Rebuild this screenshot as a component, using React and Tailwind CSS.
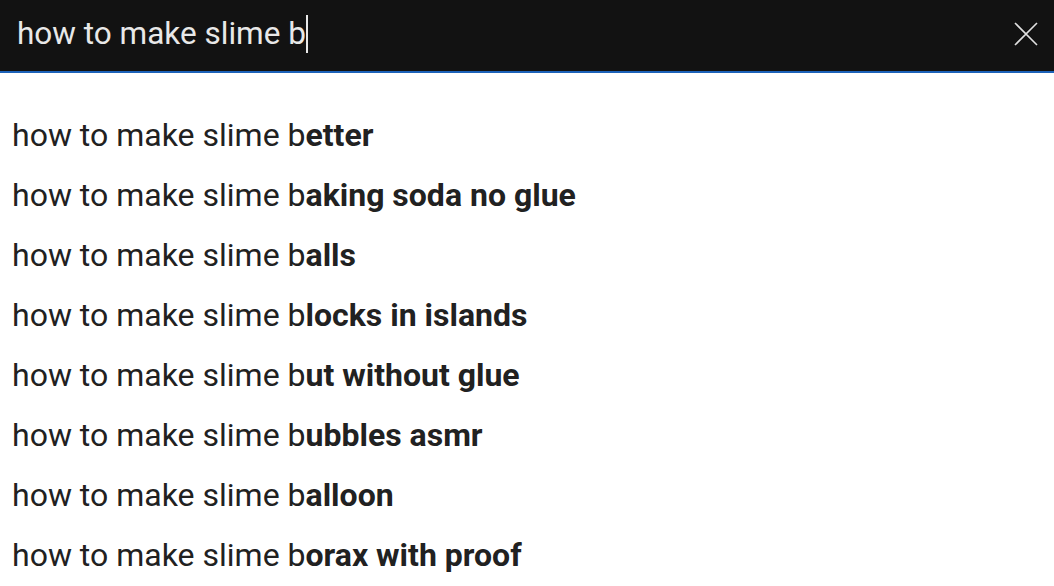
export default function App() {
  const typed = 'how to make slime b'
  const suggestions = [
    'etter',
    'aking soda no glue',
    'alls',
    'locks in islands',
    'ut without glue',
    'ubbles asmr',
    'alloon',
    'orax with proof',
  ]

  return (
    <div className="h-[586px] w-[1054px] overflow-hidden bg-white font-['Roboto',sans-serif]">
      {/* Search bar */}
      <div className="flex h-[73px] items-center justify-between border-b-2 border-[#1c62b9] bg-[#121212] pb-[4px] pl-[17px] pr-[16px]">
        <div className="flex items-center text-[31.5px] text-[#e8e8e8]">
          <span>{typed}</span>
          <span className="h-[38px] w-[2px] bg-[#e8e8e8]" />
        </div>
        <button className="flex h-[24px] w-[24px] items-center justify-center text-[#e0e0e0]">
          <svg width="24" height="24" viewBox="0 0 24 24" fill="none" stroke="currentColor" strokeWidth="1.6">
            <path d="M1 1 L23 23 M23 1 L1 23" />
          </svg>
        </button>
      </div>

      {/* Suggestions */}
      <ul className="pt-[32px]">
        {suggestions.map((s) => (
          <li key={s} className="flex h-[60px] items-center px-[12px] text-[32px] text-[#212121]">
            <span>
              how to make slime b<b className="font-bold">{s}</b>
            </span>
          </li>
        ))}
      </ul>
    </div>
  )
}
